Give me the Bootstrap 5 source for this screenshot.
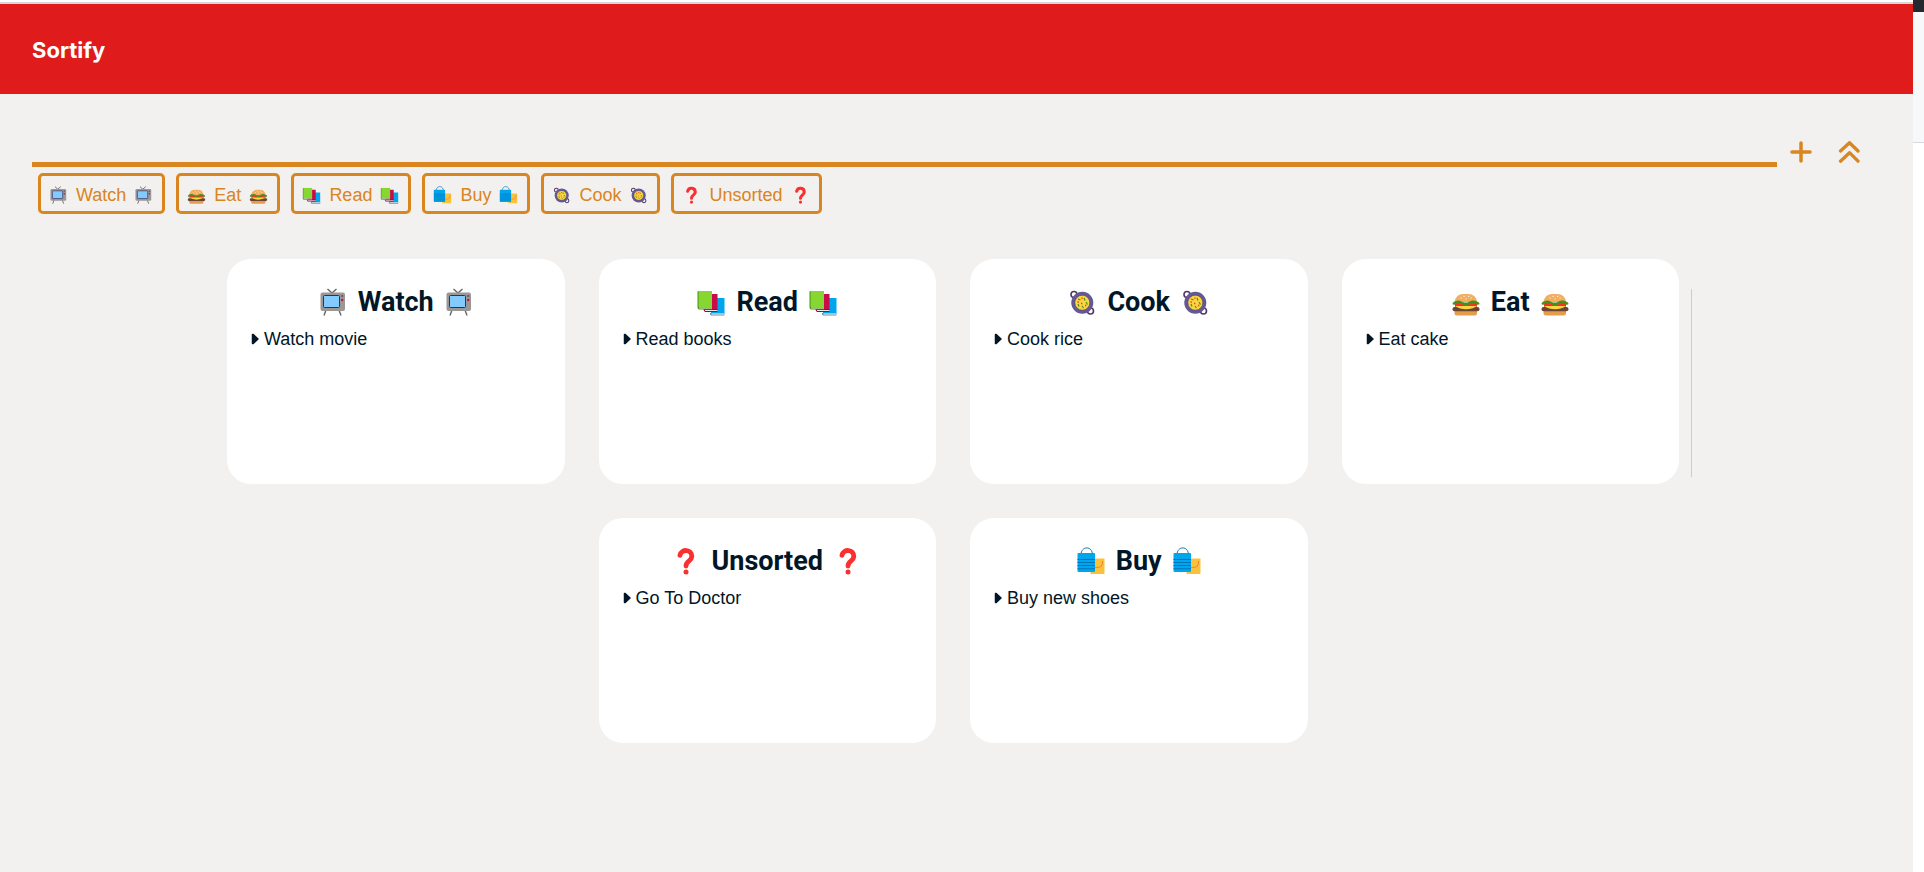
<!DOCTYPE html>
<html lang="en">
<head>
<meta charset="utf-8">
<meta name="viewport" content="width=device-width, initial-scale=1">
<title>Sortify</title>
<link href="https://cdn.jsdelivr.net/npm/bootstrap@5.3.0/dist/css/bootstrap.min.css" rel="stylesheet">
<style>
  :root { --accent: #d98520; --ink: #011627; --paper: #f3f1f0; }
  body { font-family: "Liberation Sans", Arial, sans-serif; font-size: 18px; line-height: 24px; color: var(--ink); background: var(--paper); }
  .site-head { background: #df1b1b; border-top: 2px solid #d6d6d6; margin-top: 2px; height: 92px; padding: 2px 32px 0; }
  .page-top { background: #fff; }
  .brand { font-family: Inter, sans-serif; font-weight: 700; font-size: 22px; color: #fff; text-decoration: none; }
  .tools { padding: 43px 40px 0 32px; }
  .rule { height: 5px; background: var(--accent); }
  .tool-btn { width: 48px; height: 30px; color: var(--accent); background: none; border: 0; padding: 0; }
  .filters { padding: 6px 38px 0; gap: 11px; }
  .filter-btn { height: 41px; border: 3px solid var(--accent); border-radius: 5px; color: var(--accent); background: none; padding: 2px 6px 0 5px; gap: 5px; line-height: 24px; }
  .filter-btn svg { width: 25px; height: 18px; }
  .board { width: 77%; margin: 45px auto 0; padding: 0 1px 0 7px; gap: 12px; }
  .lists { gap: 34px; }
  .list-card { width: calc((100% - 102px) / 4); height: 225px; background: #fff; border-radius: 24px; padding: 25px 24px 24px; }
  .list-card h2 { font-family: Roboto, sans-serif; font-weight: 700; font-size: 27px; line-height: 36px; margin: 0 0 7px; gap: 6px; color: var(--ink); }
  .list-card h2 svg { width: 38px; height: 28px; }
  .list-card li { gap: 5px; }
  .marker { width: 8px; height: 12px; }
  .board-end { width: 1px; height: 188px; margin-top: 30px; background: #ecc79c; }
  .side { width: 11px; background: #fff; }
  .side-head { height: 12px; background: #24292f; }
  .side-nav { height: 131px; background: #f6f8fa; border-bottom: 1px solid #d5dae0; }
</style>
</head>
<body>
<svg class="d-none" aria-hidden="true">
  <symbol id="tv" viewBox="0 0 28 28">
    <path d="M8.500 1 13 5l4.500-4M7 22l-2 5.500M20 22l2 5.500" fill="none" stroke="#666" stroke-width="1.400"/>
    <rect x="1.500" y="4.500" width="24.500" height="18.500" rx="2" fill="#9a9796"/>
    <rect x="4.500" y="7.500" width="16" height="12" rx="1" fill="#83cbff" stroke="#352e5c"/>
    <circle cx="23.200" cy="8" r="1.100" fill="#555"/><circle cx="23.200" cy="12" r="1.200" fill="#ca0b4a"/>
  </symbol>
  <symbol id="books" viewBox="0 0 28 28">
    <path d="M13 10h14.500v16H14z" fill="#00a6ed"/><path d="M13 25h14.500v2.500H14q-1.500-1-1-2.500" fill="#5e96bd"/><path d="M14.500 25.500h13v1h-13z" fill="#eee"/>
    <path d="M7 6h13.500v16H8z" fill="#ca0b4a"/><path d="M6.500 21h14v3H8q-1.500-1-1.500-3" fill="#990838"/><path d="M8 22h12.500v1H8z" fill="#e8e8e8"/>
    <path d="M1 3h14v16H1z" fill="#86d72f"/><path d="M.5 4q0-1 1-1v16h13.500v2.500H2Q.5 21 .5 19z" fill="#44911b"/><path d="M2 19.500h13v1H2z" fill="#e8e8e8"/>
  </symbol>
  <symbol id="pan" viewBox="0 0 28 28">
    <circle cx="6" cy="6.500" r="3" fill="none" stroke="#533566" stroke-width="1.600"/><circle cx="22.500" cy="23" r="3" fill="none" stroke="#533566" stroke-width="1.600"/>
    <circle cx="14.300" cy="14.700" r="11" fill="#635994"/><circle cx="14.300" cy="14.700" r="7.500" fill="#fcd53f" stroke="#493d70" stroke-width=".6"/>
    <path d="m10 11 2.500 1M16 10l1 2.500M18 14l1.500 2.500M10 16l1 2.500M14 18l1.500 2" stroke="#44911b" stroke-width="1.200"/>
    <path d="M14 9.500v1.300M9.500 14h1.300M17 17.500h1.300M13 15.500h1.300" stroke="#f8312f" stroke-width="1.300"/>
  </symbol>
  <symbol id="burger" viewBox="0 0 28 28">
    <path d="M2.500 23h22.500v2q0 2.500-2.500 2.500H5q-2.500 0-2.500-2.500z" fill="#e39d4d"/>
    <rect x="3" y="15" width="22" height="4" fill="#f8312f"/>
    <rect x=".5" y="19" width="27" height="4.300" rx="2.100" fill="#6d4534"/><path d="M3 18h22q-5 3.300-11 3.300T3 18" fill="#fcd53f"/>
    <path d="M2.500 14Q4 6 11 6h5q8 0 9 8z" fill="#f3ad61"/>
    <path d="M.5 16q0-3 6-3.500 2 0 4 1.500 4 1 6 0 3-2 5-1.500 6 1 6 3.500-.5 1-2 .8-3-1.300-5-1.300-2 0-4 1.200-3 .7-5 0-2-1.200-4-1.200-3 0-5 1.300-1.500.2-2-.8" fill="#44911b"/>
    <path d="M8.500 10h1.200M11.500 8.300h1.200M13.500 11h1.200M16 8.300h1.200M18.500 10h1.200" stroke="#fff3d5" stroke-width="1.200"/>
  </symbol>
  <symbol id="ask" viewBox="0 0 28 28">
    <path d="M8 8.200C9.500 1.500 20 2 19.800 9.500 19.500 14.500 14 14 14 19" fill="none" stroke="#f92f30" stroke-width="4.800" stroke-linecap="round"/><circle cx="14" cy="25" r="2.500" fill="#f92f30"/>
  </symbol>
  <symbol id="bags" viewBox="0 0 28 28">
    <path d="M13.500 11.500h14V26q0 1-1 1h-13z" fill="#f9c23c"/><path d="M25.500 14q1 7-7.500 6.500" fill="none" stroke="#ff822d" stroke-width="1.100"/>
    <path d="M4 8C4-1.500 15.500-1.500 15.500 8" fill="none" stroke="#0074ba" stroke-width="1"/>
    <rect x=".5" y="6" width="17.500" height="19" rx="1" fill="#00a6ed"/>
    <path d="M.5 12.500H18M.5 15.500H18M.5 18.500H18M.5 21.700H18" stroke="#0074ba" stroke-width="1.100"/>
  </symbol>
  <symbol id="caret" viewBox="0 0 8 12"><path d="M1.500 1.500v9h.7L7 6 2.200 1.500z" fill="#011627" stroke="#011627" stroke-width="1.500" stroke-linejoin="round"/></symbol>
</svg>

<div class="d-flex min-vh-100">
  <div class="flex-grow-1">
    <div class="page-top overflow-hidden">
      <header class="site-head d-flex align-items-center"><a class="brand" href="#">Sortify</a></header>
    </div>
    <main>
      <div class="tools d-flex align-items-end">
        <div class="rule flex-grow-1"></div>
        <button class="tool-btn d-flex align-items-center justify-content-center" type="button" aria-label="Add">
          <svg width="22" height="22" viewBox="0 0 22 22" fill="none" stroke="currentColor" stroke-width="3.500" stroke-linecap="round"><path d="M11 2v18M2 11h18"/></svg>
        </button>
        <button class="tool-btn d-flex align-items-center justify-content-center" type="button" aria-label="Collapse">
          <svg width="22" height="22" viewBox="0 0 22 22" fill="none" stroke="currentColor" stroke-width="3.300" stroke-linecap="round" stroke-linejoin="round"><path d="m2.500 10 9-8.300 8.500 8.300M2.500 20.200l9-8.500 8.500 8.500"/></svg>
        </button>
      </div>

      <nav class="filters d-flex flex-wrap" aria-label="Lists">
        <button class="filter-btn d-flex align-items-center" type="button"><svg><use href="#tv"/></svg>Watch<svg><use href="#tv"/></svg></button>
        <button class="filter-btn d-flex align-items-center" type="button"><svg><use href="#burger"/></svg>Eat<svg><use href="#burger"/></svg></button>
        <button class="filter-btn d-flex align-items-center" type="button"><svg><use href="#books"/></svg>Read<svg><use href="#books"/></svg></button>
        <button class="filter-btn d-flex align-items-center" type="button"><svg><use href="#bags"/></svg>Buy<svg><use href="#bags"/></svg></button>
        <button class="filter-btn d-flex align-items-center" type="button"><svg><use href="#pan"/></svg>Cook<svg><use href="#pan"/></svg></button>
        <button class="filter-btn d-flex align-items-center" type="button"><svg><use href="#ask"/></svg>Unsorted<svg><use href="#ask"/></svg></button>
      </nav>

      <div class="board d-flex">
        <div class="lists d-flex flex-wrap justify-content-center flex-grow-1">
          <section class="list-card">
            <h2 class="d-flex align-items-center justify-content-center"><svg><use href="#tv"/></svg>Watch<svg><use href="#tv"/></svg></h2>
            <ul class="list-unstyled mb-0"><li class="d-flex align-items-center"><svg class="marker"><use href="#caret"/></svg>Watch movie</li></ul>
          </section>
          <section class="list-card">
            <h2 class="d-flex align-items-center justify-content-center"><svg><use href="#books"/></svg>Read<svg><use href="#books"/></svg></h2>
            <ul class="list-unstyled mb-0"><li class="d-flex align-items-center"><svg class="marker"><use href="#caret"/></svg>Read books</li></ul>
          </section>
          <section class="list-card">
            <h2 class="d-flex align-items-center justify-content-center"><svg><use href="#pan"/></svg>Cook<svg><use href="#pan"/></svg></h2>
            <ul class="list-unstyled mb-0"><li class="d-flex align-items-center"><svg class="marker"><use href="#caret"/></svg>Cook rice</li></ul>
          </section>
          <section class="list-card">
            <h2 class="d-flex align-items-center justify-content-center"><svg><use href="#burger"/></svg>Eat<svg><use href="#burger"/></svg></h2>
            <ul class="list-unstyled mb-0"><li class="d-flex align-items-center"><svg class="marker"><use href="#caret"/></svg>Eat cake</li></ul>
          </section>
          <section class="list-card">
            <h2 class="d-flex align-items-center justify-content-center"><svg><use href="#ask"/></svg>Unsorted<svg><use href="#ask"/></svg></h2>
            <ul class="list-unstyled mb-0"><li class="d-flex align-items-center"><svg class="marker"><use href="#caret"/></svg>Go To Doctor</li></ul>
          </section>
          <section class="list-card">
            <h2 class="d-flex align-items-center justify-content-center"><svg><use href="#bags"/></svg>Buy<svg><use href="#bags"/></svg></h2>
            <ul class="list-unstyled mb-0"><li class="d-flex align-items-center"><svg class="marker"><use href="#caret"/></svg>Buy new shoes</li></ul>
          </section>
        </div>
        <div class="board-end flex-shrink-0"></div>
      </div>
    </main>
  </div>
  <aside class="side flex-shrink-0"><div class="side-head"></div><div class="side-nav"></div></aside>
</div>
<script src="https://cdn.jsdelivr.net/npm/bootstrap@5.3.0/dist/js/bootstrap.bundle.min.js"></script>
</body>
</html>
